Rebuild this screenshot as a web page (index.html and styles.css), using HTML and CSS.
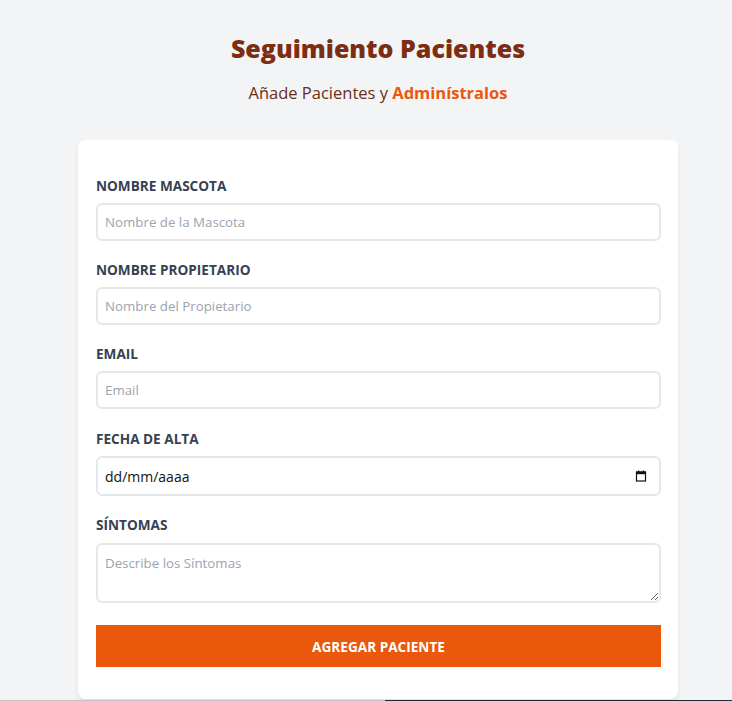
FILE: index.html
```html
<!DOCTYPE html>
<html lang="es">
<head>
<meta charset="utf-8">
<title>Seguimiento Pacientes</title>
<link rel="stylesheet" href="styles.css">
</head>
<body>
<div class="page">
  <h1 class="title">Seguimiento Pacientes</h1>
  <p class="subtitle">Añade Pacientes y <span class="accent">Adminístralos</span></p>

  <form class="card">
    <div class="field">
      <label class="label" for="mascota">Nombre Mascota</label>
      <input class="input" id="mascota" type="text" placeholder="Nombre de la Mascota">
    </div>
    <div class="field">
      <label class="label" for="propietario">Nombre Propietario</label>
      <input class="input" id="propietario" type="text" placeholder="Nombre del Propietario">
    </div>
    <div class="field">
      <label class="label" for="email">Email</label>
      <input class="input" id="email" type="email" placeholder="Email">
    </div>
    <div class="field date-field">
      <label class="label" for="alta">Fecha de Alta</label>
      <div class="input date" id="alta">
        <span class="date-text">dd/mm/aaaa</span>
        <svg class="cal" width="12" height="12" viewBox="0 0 12 12" aria-hidden="true">
          <rect x="1.5" y="2" width="9" height="9" fill="none" stroke="#111" stroke-width="1.2"/>
          <rect x="1" y="1.6" width="10" height="2.6" fill="#111"/>
          <rect x="3" y="0.5" width="1.2" height="2" fill="#111"/>
          <rect x="7.8" y="0.5" width="1.2" height="2" fill="#111"/>
        </svg>
      </div>
    </div>
    <div class="field last">
      <label class="label" for="sintomas">Síntomas</label>
      <textarea class="input textarea" id="sintomas" placeholder="Describe los Síntomas"></textarea>
    </div>
    <button class="submit" type="button">Agregar Paciente</button>
  </form>
</div>
<div class="bottom-bar"><span class="bar-light"></span><span class="bar-dark"></span></div>
</body>
</html>
```
FILE: styles.css
```css
* { box-sizing: border-box; }
html, body { margin: 0; padding: 0; }
body {
  background: #f3f4f6;
  font-family: "Open Sans", "Noto Sans", sans-serif;
  color: #374151;
  overflow: hidden;
  height: 701px;
}
.page {
  padding-left: 24px;
  padding-top: 30px;
}
.title {
  margin: 0;
  text-align: center;
  font-size: 25px;
  line-height: 36px;
  font-weight: 800;
  color: #7c2d12;
}
.subtitle {
  margin: 13px 0 0;
  text-align: center;
  font-size: 16.5px;
  line-height: 28px;
  color: #6b2d15;
}
.accent {
  color: #ea580c;
  font-weight: 700;
}
.card {
  width: 600px;
  margin: 33px auto 0;
  background: #fff;
  border-radius: 8px;
  box-shadow: 0 4px 6px -1px rgba(0,0,0,0.08), 0 2px 4px -2px rgba(0,0,0,0.06);
  padding: 36px 17px 32px 18px;
}
.field {
  display: flex;
  flex-direction: column;
  margin-bottom: 19px;
}
.date-field { padding-top: 1px; }
.label {
  display: block;
  font-size: 13.6px;
  line-height: 20px;
  font-weight: 700;
  text-transform: uppercase;
  color: #374151;
  margin-bottom: 7px;
}
.input {
  display: block;
  width: 100%;
  height: 38px;
  border: 2px solid #e5e7eb;
  border-radius: 6px;
  padding: 0 7px;
  font-family: inherit;
  font-size: 13.3px;
  color: #111827;
  background: #fff;
  outline: none;
}
.input::placeholder { color: #9ca3af; }
.date {
  height: 40px;
  display: flex;
  align-items: center;
  justify-content: space-between;
  padding: 0 7px;
}
.date-text {
  font-size: 14px;
  color: #111;
}
.cal { margin-right: 5px; }
.textarea {
  height: 60px;
  margin-top: 1px;
  padding: 8px 7px;
  line-height: 20px;
  resize: vertical;
}
.field.last { margin-bottom: 22px; }
.submit {
  display: block;
  width: 100%;
  height: 42px;
  border: none;
  background: #ea580c;
  color: #fff;
  font-family: inherit;
  font-size: 13.6px;
  font-weight: 700;
  text-transform: uppercase;
  cursor: pointer;
}
.bottom-bar {
  position: fixed;
  left: 0;
  right: 0;
  bottom: 0;
  height: 1px;
  display: flex;
}
.bar-light { width: 385px; background: #c4c4c4; }
.bar-dark { flex: 1; background: #1f2a37; }
```
